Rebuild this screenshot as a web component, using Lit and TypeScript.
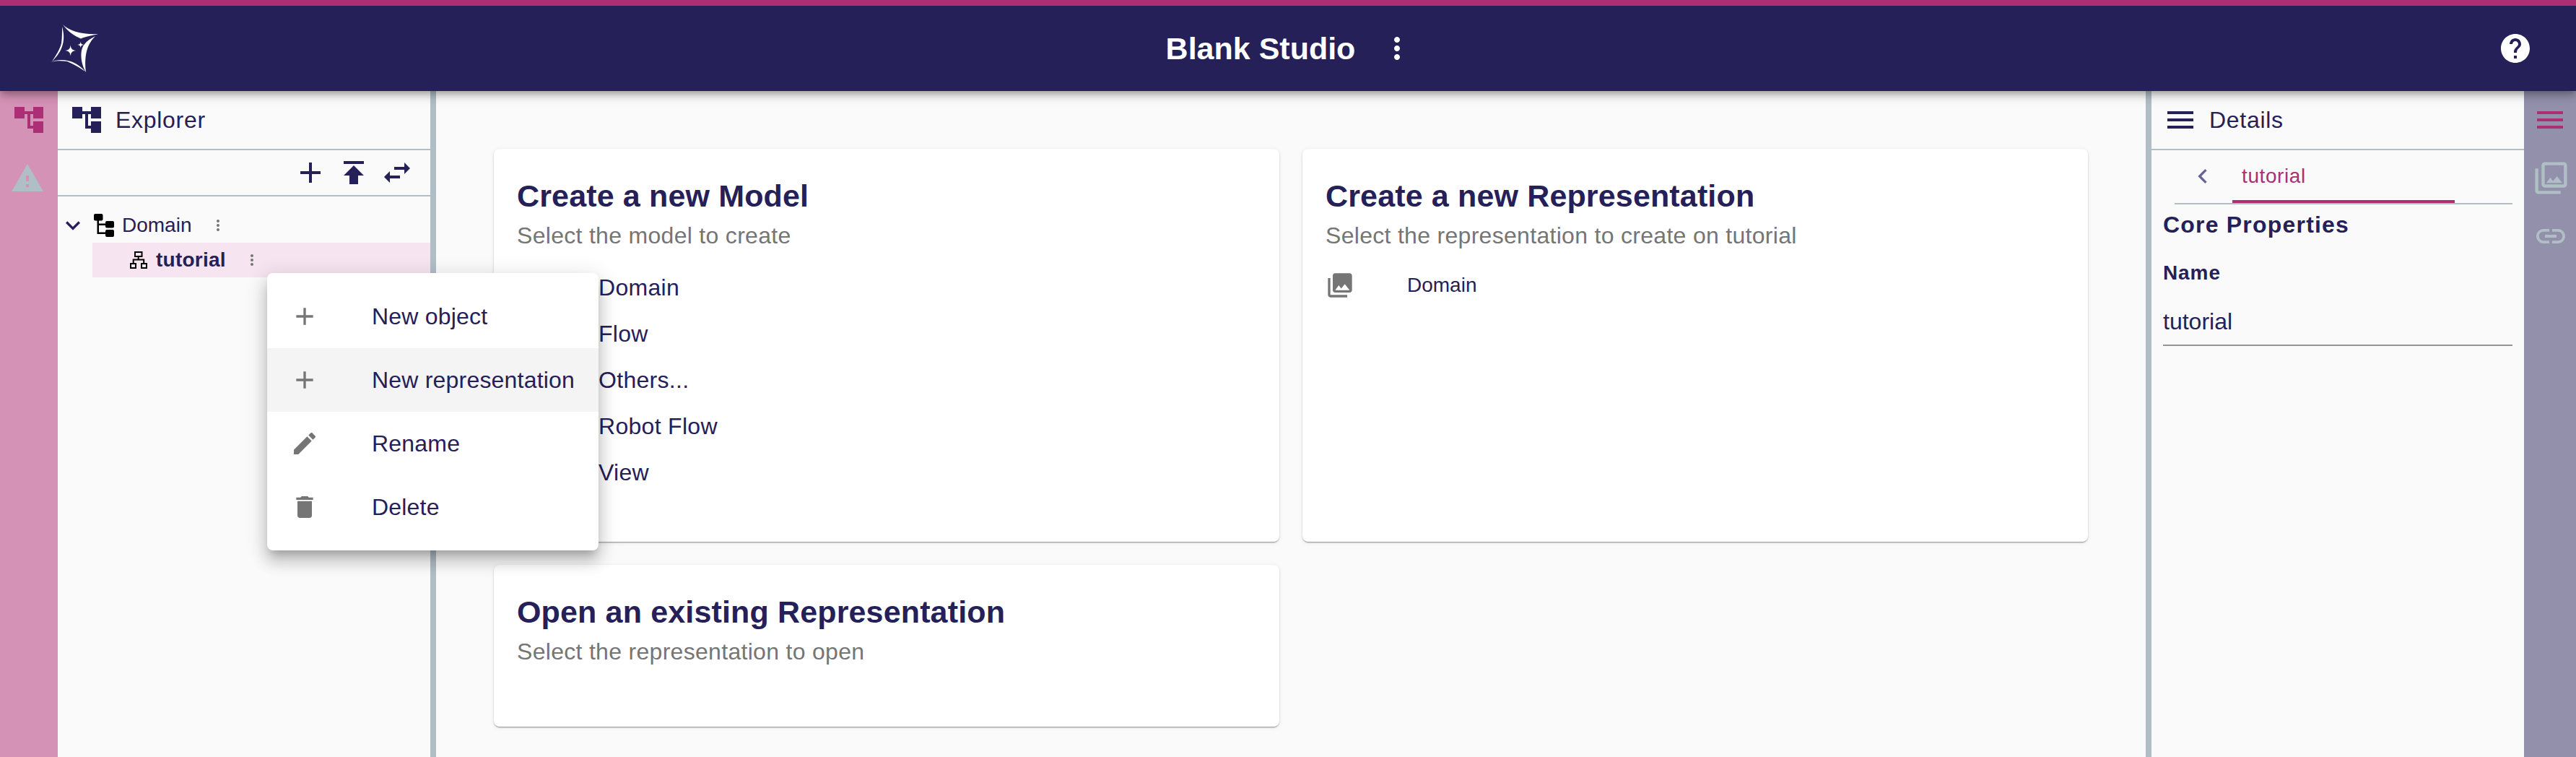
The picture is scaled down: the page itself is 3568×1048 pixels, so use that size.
import { LitElement, css, html, svg } from 'lit';
import { customElement } from 'lit/decorators.js';

const ICONS = {
  tree: 'M22 11V3h-7v3H9V3H2v8h7V8h2v10h4v3h7v-8h-7v3h-2V8h2v3z',
  plus: 'M19 13h-6v6h-2v-6H5v-2h6V5h2v6h6v2z',
  publish: 'M5 4v2h14V4H5zm0 10h4v6h6v-6h4l-7-7-7 7z',
  swap: 'M6.99 11L3 15l3.99 4v-3H14v-2H6.99v-3zM21 9l-3.99-4v3H10v2h7.01v3L21 9z',
  expand: 'M16.59 8.59L12 13.17 7.41 8.59 6 10l6 6 6-6z',
  more: 'M12 8c1.1 0 2-.9 2-2s-.9-2-2-2-2 .9-2 2 .9 2 2 2zm0 2c-1.1 0-2 .9-2 2s.9 2 2 2 2-.9 2-2-.9-2-2-2zm0 6c-1.1 0-2 .9-2 2s.9 2 2 2 2-.9 2-2-.9-2-2-2z',
  menu: 'M3 18h18v-2H3v2zm0-5h18v-2H3v2zm0-7v2h18V6H3z',
  help: 'M12 2C6.48 2 2 6.48 2 12s4.48 10 10 10 10-4.48 10-10S17.52 2 12 2zm1 17h-2v-2h2v2zm2.07-7.75l-.9.92C13.45 12.9 13 13.5 13 15h-2v-.5c0-1.1.45-2.1 1.17-2.83l1.24-1.26c.37-.36.59-.86.59-1.41 0-1.1-.9-2-2-2s-2 .9-2 2H8c0-2.21 1.79-4 4-4s4 1.79 4 4c0 .88-.36 1.68-.93 2.25z',
  warning: 'M1 21h22L12 2 1 21zm12-3h-2v-2h2v2zm0-4h-2v-4h2v4z',
  pencil: 'M3 17.25V21h3.75L17.81 9.94l-3.75-3.75L3 17.25zM20.71 7.04c.39-.39.39-1.02 0-1.41l-2.34-2.34c-.39-.39-1.02-.39-1.41 0l-1.83 1.83 3.75 3.75 1.83-1.83z',
  trash: 'M6 19c0 1.1.9 2 2 2h8c1.1 0 2-.9 2-2V7H6v12zM19 4h-3.5l-1-1h-5l-1 1H5v2h14V4z',
  back: 'M15.41 7.41L14 6l-6 6 6 6 1.41-1.41L10.83 12z',
  library: 'M22 16V4c0-1.1-.9-2-2-2H8c-1.1 0-2 .9-2 2v12c0 1.1.9 2 2 2h12c1.1 0 2-.9 2-2zm-11-4l2.03 2.71L16 11l4 5H8l3-4zM2 6v14c0 1.1.9 2 2 2h14v-2H4V6H2z',
  libraryOutlined: 'M20 4v12H8V4h12m0-2H8c-1.1 0-2 .9-2 2v12c0 1.1.9 2 2 2h12c1.1 0 2-.9 2-2V4c0-1.1-.9-2-2-2zm-8.5 9.67l1.69 2.26 2.48-3.1L19 15H9zM2 6v14c0 1.1.9 2 2 2h14v-2H4V6H2z',
  link: 'M3.9 12c0-1.71 1.39-3.1 3.1-3.1h4V7H7c-2.76 0-5 2.24-5 5s2.24 5 5 5h4v-1.9H7c-1.71 0-3.1-1.39-3.1-3.1zM8 13h8v-2H8v2zm9-6h-4v1.9h4c1.71 0 3.1 1.39 3.1 3.1s-1.39 3.1-3.1 3.1h-4V17h4c2.76 0 5-2.24 5-5s-2.24-5-5-5z',
};

const icon = (name: keyof typeof ICONS, cls = '') => html`
  <svg class="icon ${cls}" viewBox="0 0 24 24" fill="currentColor" fill-rule="evenodd">
    ${svg`<path d=${ICONS[name]}></path>`}
  </svg>
`;

const MODEL_ITEMS = ['Domain', 'Flow', 'Others...', 'Robot Flow', 'View'];

@customElement('app-root')
export class AppRoot extends LitElement {
  static styles = css`
    :host {
      display: block;
      width: 3568px;
      height: 1048px;
      overflow: hidden;
      position: relative;
      background: #fafafa;
      color: #252058;
      font-family: 'Liberation Sans', Arial, sans-serif;
    }
    .icon {
      display: block;
      width: 48px;
      height: 48px;
      flex: none;
    }

    /* top bar */
    .navbar {
      position: relative;
      z-index: 2;
      box-sizing: border-box;
      height: 126px;
      border-top: 8px solid #ac2e74;
      background: #252058;
      color: #fff;
      display: grid;
      grid-template-columns: 1fr auto 1fr;
      align-items: center;
      box-shadow: 0 4px 8px -2px rgba(0, 0, 0, 0.2), 0 8px 10px 0 rgba(0, 0, 0, 0.14), 0 2px 20px 0 rgba(0, 0, 0, 0.12);
    }
    .logo {
      display: block;
      width: 90px;
      height: 84px;
      margin: -2px 0 0 60px;
    }
    .brand {
      display: flex;
      align-items: center;
      gap: 34px;
      padding-left: 6px;
    }
    .brand-name {
      font-size: 43px;
      font-weight: 700;
    }
    .help-wrap {
      justify-self: end;
      margin-right: 60px;
    }

    /* workbench */
    .workbench {
      display: flex;
      height: 922px;
    }
    .rail {
      flex: none;
      display: flex;
      flex-direction: column;
      align-items: center;
      padding-top: 16px;
      box-sizing: border-box;
    }
    .rail-left {
      width: 80px;
      background: #d492b6;
      color: #ac2e74;
      gap: 33px;
    }
    .rail-right {
      width: 72px;
      background: #9290ab;
      color: #b0bec5;
      gap: 0;
    }
    .rail-warning {
      color: #b0bec5;
      margin-left: -4px;
    }
    .rail-right .active {
      color: #ac2e74;
    }
    .rail-right .library {
      width: 53px;
      height: 53px;
      margin-top: 30px;
      margin-left: 2px;
    }
    .rail-right .link {
      margin-top: 30px;
      margin-left: 2px;
    }

    .panel {
      flex: none;
      width: 516px;
      display: flex;
      flex-direction: column;
    }
    .splitter {
      flex: none;
      width: 8px;
      background: #b0bec5;
    }
    .panel-head {
      box-sizing: border-box;
      height: 82px;
      padding: 16px 0 0 16px;
      border-bottom: 2px solid #b0bec5;
      display: flex;
      align-items: flex-start;
      gap: 16px;
    }
    .panel-title {
      font-size: 32px;
      line-height: 48px;
      letter-spacing: 0.7px;
    }
    .details-head .panel-title {
      letter-spacing: 0;
    }

    .toolbar {
      box-sizing: border-box;
      height: 64px;
      padding: 7px 22px 0 0;
      border-bottom: 2px solid #b0bec5;
      display: flex;
      justify-content: flex-end;
      gap: 12px;
    }
    .tree {
      display: flex;
      flex-direction: column;
      padding-top: 16px;
    }
    .tree-row {
      display: flex;
      align-items: center;
      height: 48px;
    }
    .tree-row .chevron {
      width: 40px;
      height: 40px;
      margin: 0 9px 0 1px;
    }
    .node-icon {
      display: block;
      flex: none;
    }
    .tree-label {
      font-size: 28px;
    }
    .tree-row .dots {
      width: 24px;
      height: 24px;
      color: #757575;
    }
    .tree-domain .tree-label {
      margin-left: 11px;
    }
    .tree-domain .dots {
      margin-left: 25px;
    }
    .tree-selected {
      margin-left: 48px;
      background: #f6e5f0;
    }
    .tree-selected .node-icon {
      margin-left: 52px;
    }
    .tree-selected .tree-label {
      font-weight: 700;
      letter-spacing: 0.25px;
      margin-left: 12px;
    }
    .tree-selected .dots {
      margin-left: 24px;
    }

    /* main area */
    .main {
      flex: none;
      width: 2368px;
      box-sizing: border-box;
      padding: 80px;
      display: grid;
      grid-template-columns: 1088px 1088px;
      grid-template-rows: 544px 224px;
      gap: 32px;
    }
    .card {
      box-sizing: border-box;
      padding: 40px 32px 32px;
      background: #fff;
      border-radius: 8px;
      box-shadow: 0 2px 2px -1px rgba(0, 0, 0, 0.3), 0 1px 2px 0 rgba(0, 0, 0, 0.14), 0 1px 6px 0 rgba(0, 0, 0, 0.08);
    }
    .card-title {
      margin: 0;
      font-size: 43px;
      font-weight: 700;
      line-height: 50px;
      letter-spacing: 0.15px;
    }
    .card-subtitle {
      margin: 7px 0 0;
      font-size: 32px;
      line-height: 46px;
      letter-spacing: 0.3px;
      color: #757575;
    }
    .model-list {
      margin-top: 17px;
    }
    .model-item {
      display: flex;
      align-items: center;
      height: 64px;
      padding-left: 113px;
      font-size: 32px;
      letter-spacing: 0.3px;
    }
    .rep-item {
      display: flex;
      align-items: center;
      height: 40px;
      margin-top: 26px;
      font-size: 28px;
      gap: 73px;
    }
    .rep-item .icon {
      width: 40px;
      height: 40px;
      color: #757575;
    }

    /* details */
    .tabs {
      margin: 0 16px 0 32px;
      height: 75px;
      box-sizing: border-box;
      border-bottom: 2px solid #b0bec5;
      display: flex;
    }
    .tab-back {
      width: 40px;
      height: 40px;
      margin: 16px 0 0 19px;
      color: #6a6590;
    }
    .tab {
      box-sizing: border-box;
      width: 308px;
      height: 73px;
      margin-left: 21px;
      padding: 16px 0 0 13px;
      border-bottom: 4px solid #ac2e74;
      color: #ac2e74;
      font-size: 28px;
      line-height: 40px;
      letter-spacing: 0.6px;
    }
    .details-body {
      padding: 8px 16px 0 16px;
    }
    .section-title {
      font-size: 32px;
      font-weight: 700;
      line-height: 40px;
      letter-spacing: 1.2px;
    }
    .field-label {
      margin-top: 31px;
      font-size: 28px;
      font-weight: 700;
      line-height: 32px;
      letter-spacing: 0.9px;
    }
    .field-input {
      margin-top: 29px;
      box-sizing: border-box;
      height: 56px;
      border-bottom: 2px solid #949494;
      font-size: 32px;
      line-height: 44px;
    }

    /* context menu */
    .context-menu {
      position: absolute;
      left: 370px;
      top: 378px;
      z-index: 3;
      width: 459px;
      padding: 16px 0;
      background: #fff;
      border-radius: 8px;
      box-shadow: 0 10px 12px -6px rgba(0, 0, 0, 0.2), 0 16px 20px 2px rgba(0, 0, 0, 0.14), 0 6px 28px 4px rgba(0, 0, 0, 0.12);
    }
    .menu-item {
      display: flex;
      align-items: center;
      height: 88px;
      padding-left: 32px;
      font-size: 32px;
      letter-spacing: 0.2px;
    }
    .menu-item .icon {
      width: 40px;
      height: 40px;
      margin-right: 73px;
      color: #757575;
    }
    .menu-item.hover {
      background: #f4f4f4;
    }
  `;

  private renderLogo() {
    return html`
      <svg class="logo" viewBox="0 0 90 84" fill="#fff">
        <path d="M27 10C36 19 54 24 76 23C65 25.5 58 27 52 29.5C44 26 34 20 27 10Z"></path>
        <path d="M72 26C62 36 56 50 59 76C54 68 52 58 52.5 50C53 40 58 33 72 26Z"></path>
        <path d="M10 62C24 56 44 58 58 75C48 68 40 64 33 61C24 60 16 60 10 62Z"></path>
        <path d="M26 13C31 30 28 46 12 61C18 52 23 44 25 36C26 28 26 20 26 13Z"></path>
        <path d="M37.7 38.5C38.3 43.5 40 45.3 45.2 46C40 46.7 38.3 48.5 37.7 53.5C37.1 48.5 35.4 46.7 30.2 46C35.4 45.3 37.1 43.5 37.7 38.5Z"></path>
        <path d="M51.7 33.5C52 36.5 53 37.6 56.2 38C53 38.4 52 39.5 51.7 42.5C51.4 39.5 50.4 38.4 47.2 38C50.4 37.6 51.4 36.5 51.7 33.5Z"></path>
      </svg>
    `;
  }

  private renderDomainIcon() {
    return html`
      <svg class="node-icon" width="28" height="32" viewBox="0 0 28 32" fill="#000">
        <rect x="0" y="0" width="12.5" height="9.5" rx="2"></rect>
        <rect x="16" y="10" width="12" height="9.5" rx="2"></rect>
        <rect x="16" y="22" width="12" height="10" rx="2"></rect>
        <path d="M4.5 9h2.5v4.5h10V16h-10v9.5h10V28H4.5z"></path>
      </svg>
    `;
  }

  private renderModelIcon() {
    return html`
      <svg class="node-icon" width="24" height="24" viewBox="0 0 24 24" fill="none" stroke="#000" stroke-width="2">
        <rect x="7" y="1" width="9.5" height="6"></rect>
        <rect x="1" y="17" width="7" height="6"></rect>
        <rect x="16" y="17" width="7" height="6"></rect>
        <path d="M11.7 7v4.5M4.7 17v-5.5h14.5v5.5"></path>
      </svg>
    `;
  }

  protected render() {
    return html`
      <header class="navbar">
        ${this.renderLogo()}
        <div class="brand">
          <span class="brand-name">Blank Studio</span>
          ${icon('more')}
        </div>
        ${icon('help', 'help-wrap')}
      </header>

      <div class="workbench">
        <nav class="rail rail-left">
          ${icon('tree')}
          ${icon('warning', 'rail-warning')}
        </nav>

        <section class="panel">
          <div class="panel-head">
            ${icon('tree')}
            <span class="panel-title">Explorer</span>
          </div>
          <div class="toolbar">
            ${icon('plus')} ${icon('publish')} ${icon('swap')}
          </div>
          <div class="tree">
            <div class="tree-row tree-domain">
              ${icon('expand', 'chevron')}
              ${this.renderDomainIcon()}
              <span class="tree-label">Domain</span>
              ${icon('more', 'dots')}
            </div>
            <div class="tree-row tree-selected">
              ${this.renderModelIcon()}
              <span class="tree-label">tutorial</span>
              ${icon('more', 'dots')}
            </div>
          </div>
        </section>
        <div class="splitter"></div>

        <main class="main">
          <article class="card">
            <h2 class="card-title">Create a new Model</h2>
            <p class="card-subtitle">Select the model to create</p>
            <div class="model-list">
              ${MODEL_ITEMS.map((item) => html`<div class="model-item">${item}</div>`)}
            </div>
          </article>
          <article class="card">
            <h2 class="card-title">Create a new Representation</h2>
            <p class="card-subtitle">Select the representation to create on tutorial</p>
            <div class="rep-item">${icon('library')}<span>Domain</span></div>
          </article>
          <article class="card">
            <h2 class="card-title">Open an existing Representation</h2>
            <p class="card-subtitle">Select the representation to open</p>
          </article>
        </main>

        <div class="splitter"></div>
        <section class="panel">
          <div class="panel-head">
            ${icon('menu')}
            <span class="panel-title details-title">Details</span>
          </div>
          <div class="tabs">
            ${icon('back', 'tab-back')}
            <div class="tab">tutorial</div>
          </div>
          <div class="details-body">
            <div class="section-title">Core Properties</div>
            <div class="field-label">Name</div>
            <div class="field-input">tutorial</div>
          </div>
        </section>
        <nav class="rail rail-right">
          ${icon('menu', 'active')}
          ${icon('libraryOutlined', 'library')}
          ${icon('link', 'link')}
        </nav>
      </div>

      <div class="context-menu">
        <div class="menu-item">${icon('plus')}New object</div>
        <div class="menu-item hover">${icon('plus')}New representation</div>
        <div class="menu-item">${icon('pencil')}Rename</div>
        <div class="menu-item">${icon('trash')}Delete</div>
      </div>
    `;
  }
}
